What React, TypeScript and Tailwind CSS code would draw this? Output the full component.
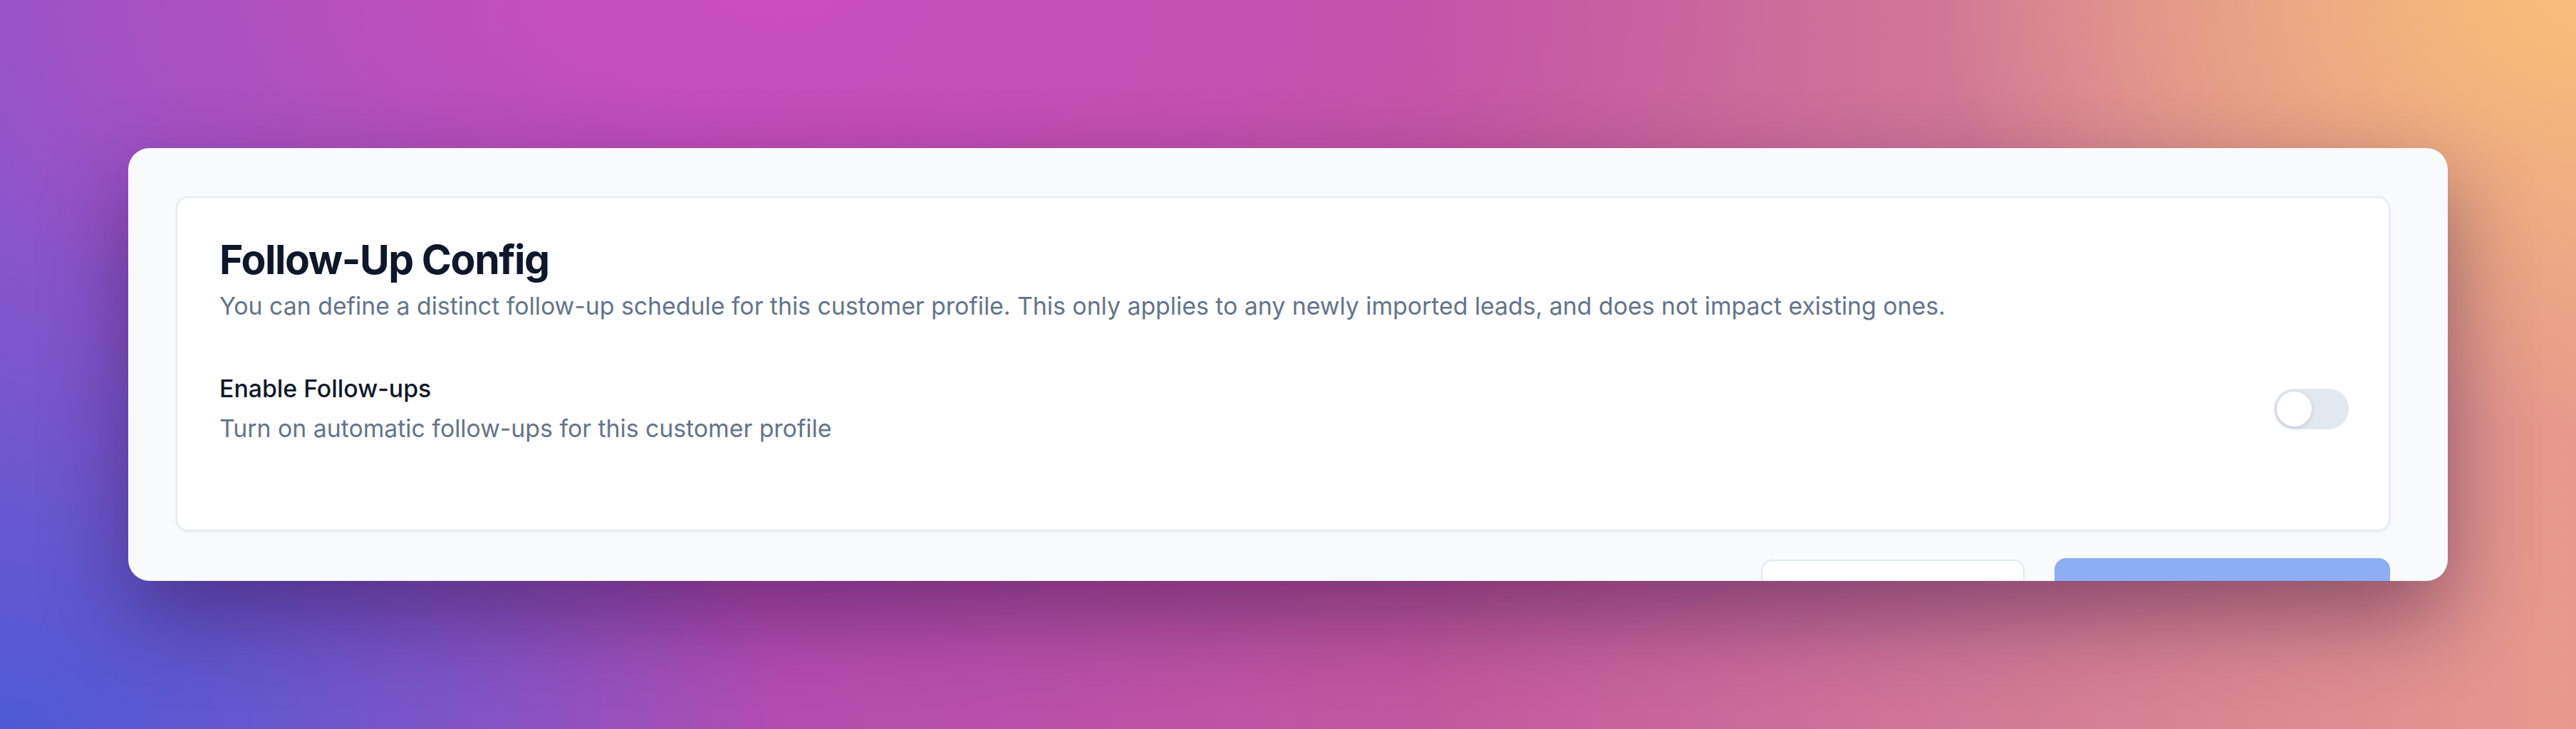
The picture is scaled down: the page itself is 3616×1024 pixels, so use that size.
import React, { useState } from "react";

export default function App() {
  const [enabled, setEnabled] = useState(false);

  return (
    <div
      className="w-full h-[1024px] overflow-hidden pt-[208px] px-[180px] bg-[radial-gradient(ellipse_900px_600px_at_100%_0%,#f8be78,transparent),radial-gradient(ellipse_1100px_700px_at_0%_100%,#4d5ad5,transparent),radial-gradient(ellipse_1400px_500px_at_30%_0%,#c94fbd,transparent),linear-gradient(to_right,#8a55ca,#b44cb0_30%,#c1579f_55%,#d27a96_78%,#e79a8c)]"
      style={{ fontFamily: "Inter, 'Noto Sans', sans-serif" }}
    >
      <div className="h-[608px] overflow-hidden rounded-[30px] bg-[#f8fafc] pl-[67px] pr-[81px] pt-[68px] shadow-[0_50px_120px_rgba(40,10,60,0.45)]">
        {/* card */}
        <div className="rounded-[17px] border-2 border-[#e5e9f0] bg-white pl-[59px] pr-[56px] pt-[52px] pb-[120px] shadow-[0_2px_4px_rgba(15,23,42,0.05)]">
          <h2 className="text-[57px] leading-[70px] font-bold tracking-[-0.025em] text-[#0f172a]">
            Follow-Up Config
          </h2>
          <p className="mt-[8px] text-[33.8px] leading-[44px] text-[#64748b]">
            You can define a distinct follow-up schedule for this customer profile. This only applies to any newly imported leads, and does not impact existing ones.
          </p>

          <div className="mt-[72px] flex items-center justify-between">
            <div className="flex flex-col gap-[12px]">
              <span className="text-[33.8px] leading-[44px] font-medium text-[#0f172a]">Enable Follow-ups</span>
              <span className="text-[33.8px] leading-[44px] text-[#64748b]">
                Turn on automatic follow-ups for this customer profile
              </span>
            </div>
            <button
              onClick={() => setEnabled(!enabled)}
              className={`relative h-[57px] w-[105px] shrink-0 rounded-full p-[4px] flex items-center ${
                enabled ? "bg-[#3b82f6] justify-end" : "bg-[#e2e8f0] justify-start"
              }`}
            >
              <span className="block h-[49px] w-[49px] rounded-full bg-white shadow-[0_2px_6px_rgba(15,23,42,0.15)]" />
            </button>
          </div>
        </div>

        {/* footer */}
        <div className="mt-[40px] flex justify-end gap-[42px]">
          <button className="h-[92px] w-[370px] rounded-[16px] border-2 border-[#e2e8f0] bg-white" />
          <button className="h-[92px] w-[471px] rounded-[16px] bg-[#8daef2] -mt-[2px]" />
        </div>
      </div>
    </div>
  );
}
